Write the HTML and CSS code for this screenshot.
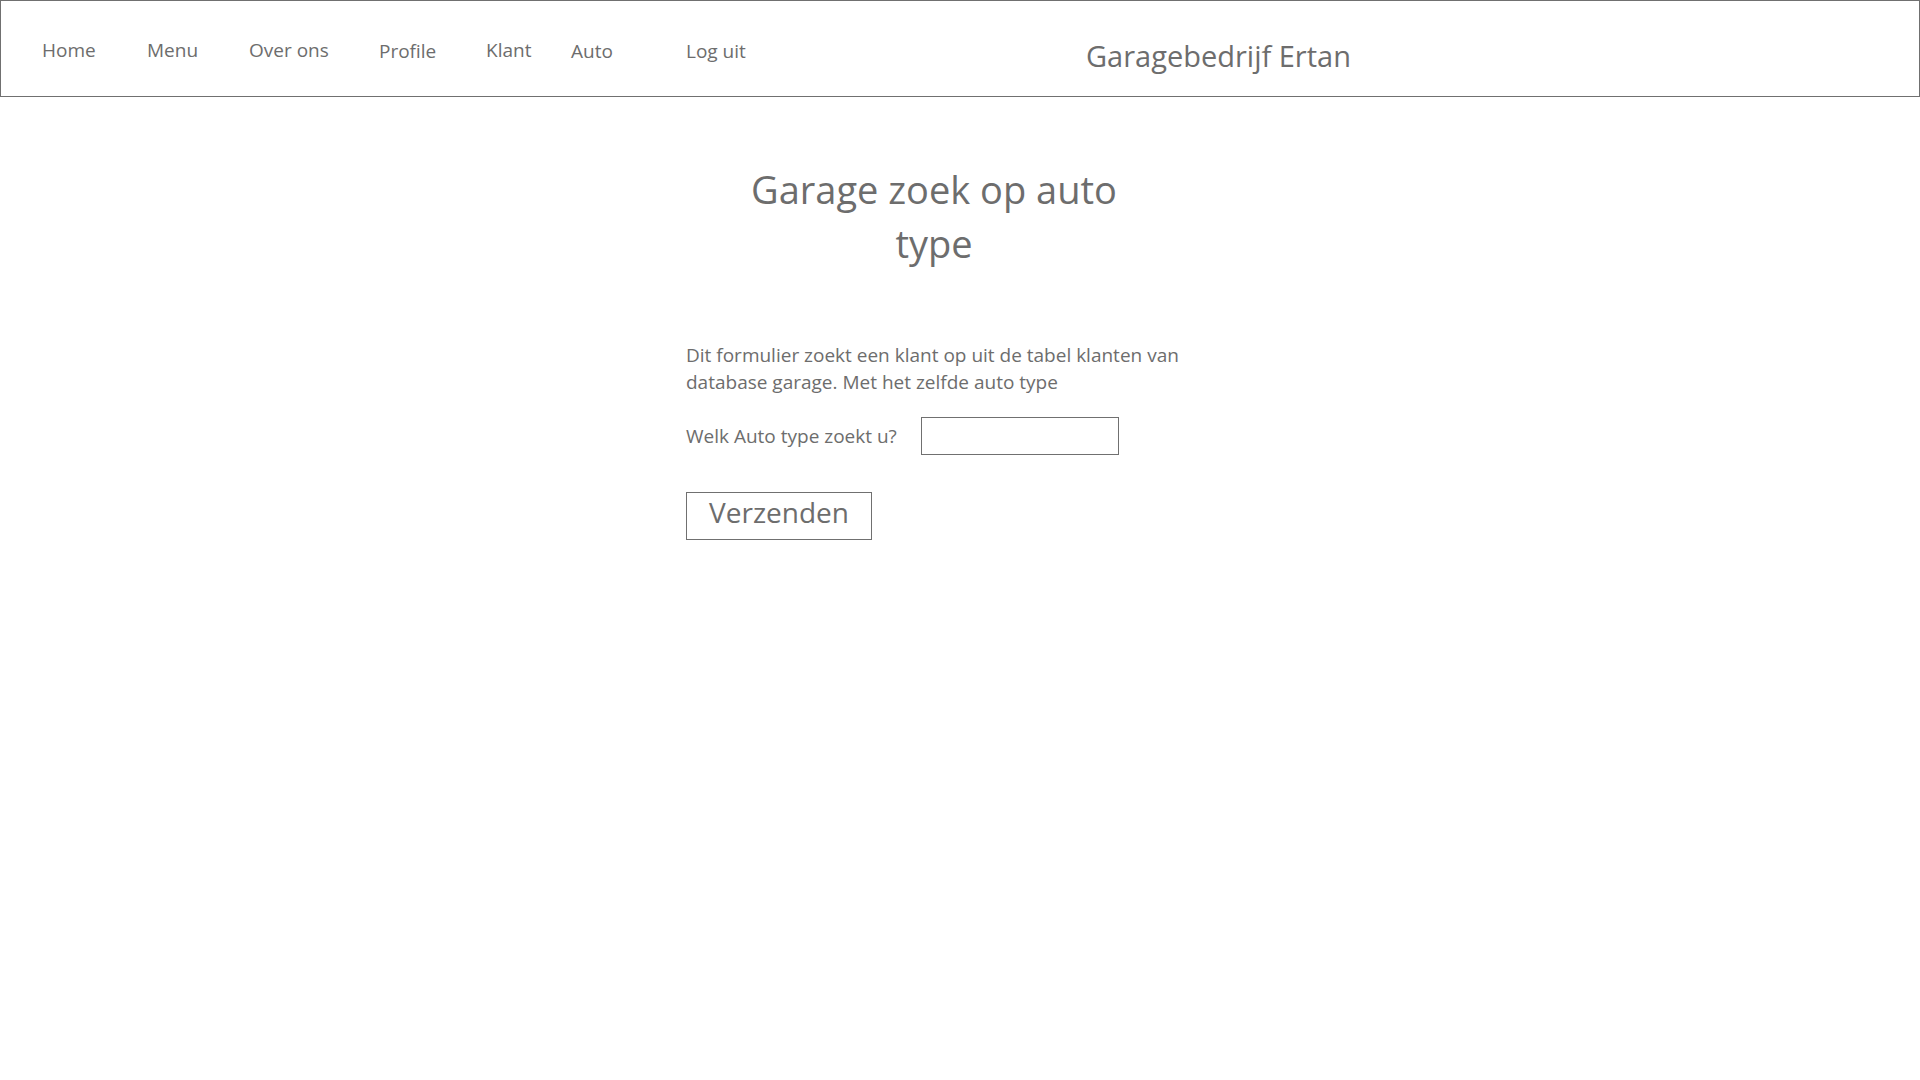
FILE: index.html
```html
<!DOCTYPE html>
<html lang="nl">
<head>
<meta charset="utf-8">
<title>Garagebedrijf Ertan</title>
<link rel="stylesheet" href="styles.css">
</head>
<body>
<header class="topbar">
  <nav class="nav">
    <a class="nav-link w-home" href="#">Home</a>
    <a class="nav-link w-menu" href="#">Menu</a>
    <a class="nav-link w-over" href="#">Over ons</a>
    <a class="nav-link w-profile low" href="#">Profile</a>
    <a class="nav-link w-klant" href="#">Klant</a>
    <a class="nav-link w-auto low" href="#">Auto</a>
    <a class="nav-link w-logout low" href="#">Log uit</a>
  </nav>
  <div class="brand">Garagebedrijf Ertan</div>
</header>
<main class="content">
  <h1 class="title">Garage zoek op auto type</h1>
  <p class="intro">Dit formulier zoekt een klant op uit de tabel klanten van database garage. Met het zelfde auto type</p>
  <form class="form">
    <div class="row">
      <label class="label" for="type">Welk Auto type zoekt u?</label>
      <input class="field" id="type" type="text">
    </div>
    <button class="submit" type="button">Verzenden</button>
  </form>
</main>
</body>
</html>
```

FILE: styles.css
```css
html, body {
  margin: 0;
  padding: 0;
  background: #ffffff;
}
body {
  font-family: "Open Sans", "Noto Sans", sans-serif;
  color: #6d6d6d;
}
.topbar {
  height: 95px;
  border: 1px solid #707070;
  display: flex;
  align-items: flex-start;
}
.nav {
  display: flex;
  padding-left: 41px;
  padding-top: 36px;
  font-size: 19px;
  line-height: 26px;
}
.nav-link {
  color: #6d6d6d;
  text-decoration: none;
}
.nav-link.low { padding-top: 1px; }
.w-home { width: 105px; }
.w-menu { width: 102px; }
.w-over { width: 130px; }
.w-profile { width: 107px; }
.w-klant { width: 85px; }
.w-auto { width: 115px; }
.w-logout { width: 400px; }
.brand {
  padding-top: 36px;
  font-size: 29px;
  line-height: 38px;
}
.content {
  margin-left: 686px;
  width: 496px;
  padding-top: 65px;
}
.title {
  width: 400px;
  margin: 0 auto;
  text-align: center;
  font-weight: 400;
  font-size: 38px;
  line-height: 54px;
}
.intro {
  margin: 72px 0 0 0;
  font-size: 19px;
  line-height: 27px;
}
.form {
  margin: 0;
}
.row {
  display: flex;
  align-items: center;
  margin-top: 21px;
}
.label {
  font-size: 19px;
  line-height: 27px;
  width: 235px;
}
.field {
  box-sizing: border-box;
  width: 198px;
  height: 38px;
  border: 1px solid #707070;
  border-radius: 0;
  margin: 0;
  padding: 0 6px;
  font-family: inherit;
  background: #fff;
}
.submit {
  display: block;
  box-sizing: border-box;
  margin-top: 37px;
  width: 186px;
  height: 48px;
  border: 1px solid #707070;
  border-radius: 0;
  background: #fff;
  color: #6d6d6d;
  font-family: inherit;
  font-size: 28px;
  line-height: 36px;
  padding: 0 0 8px 0;
}
```
